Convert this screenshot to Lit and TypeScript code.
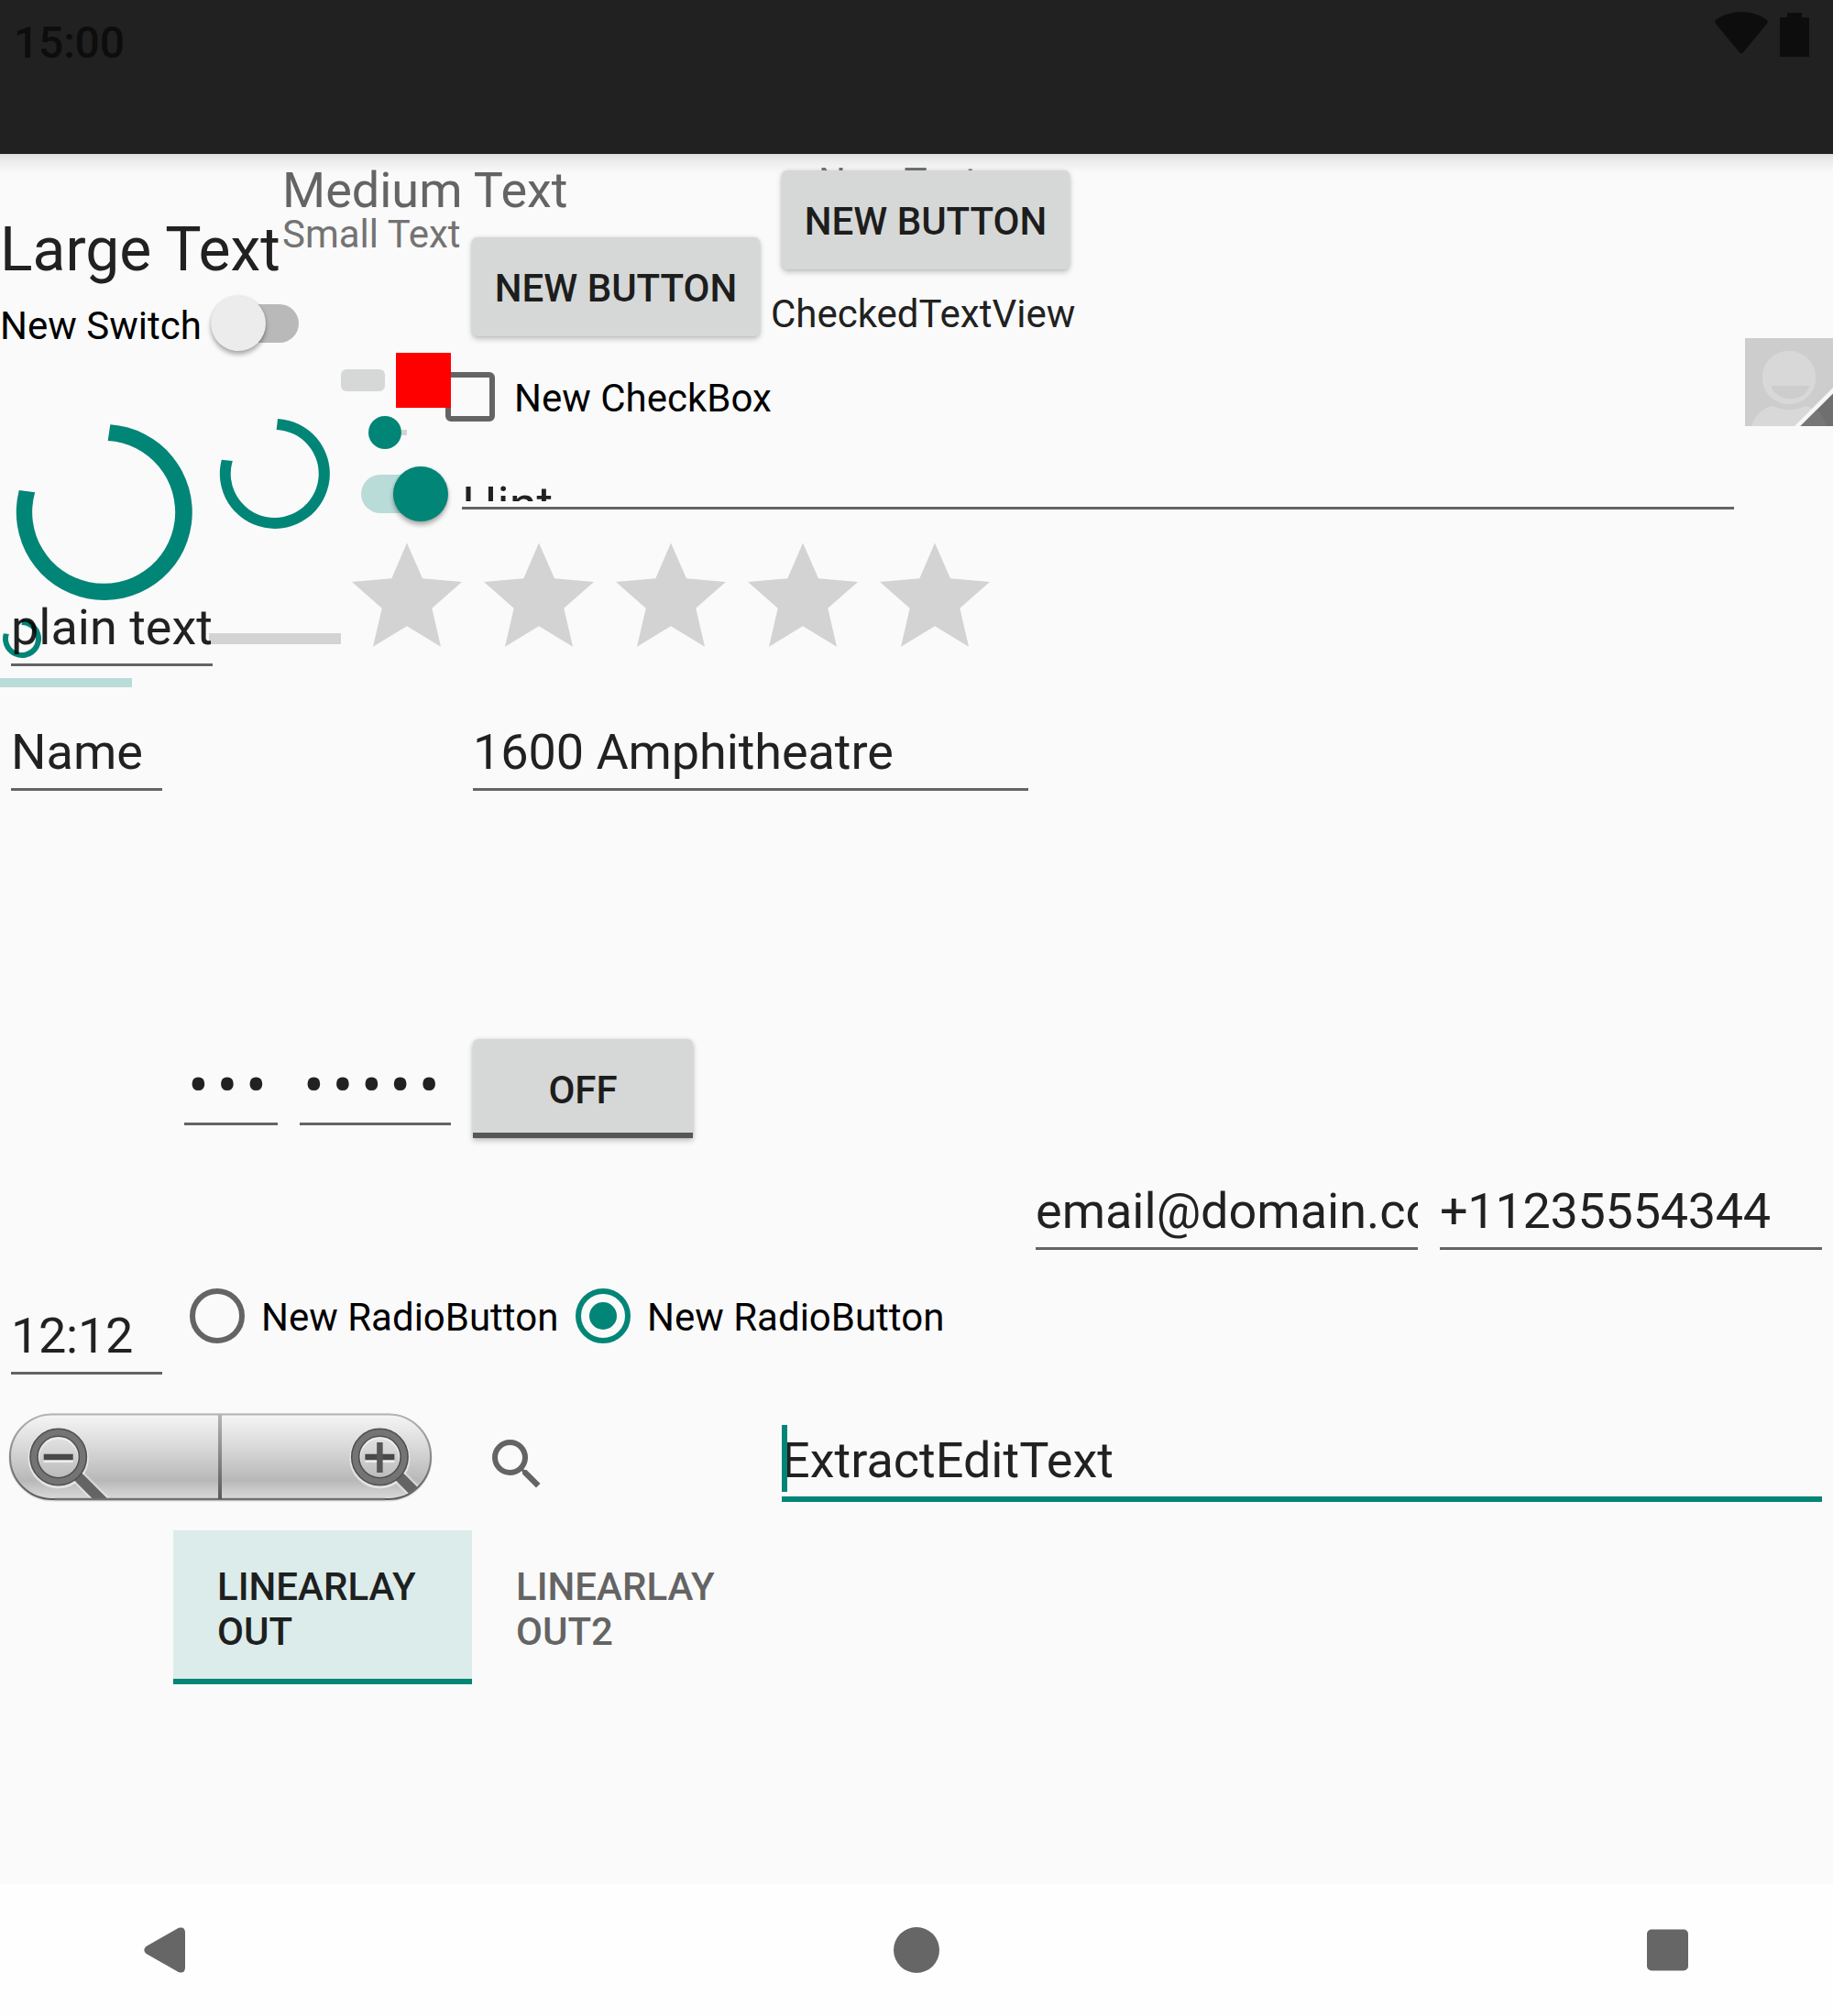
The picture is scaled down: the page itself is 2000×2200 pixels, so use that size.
import { LitElement, html, css, svg } from "lit";
import { customElement, property } from "lit/decorators.js";
import { classMap } from "lit/directives/class-map.js";

/** Single-line text field with an underline. */
@customElement("edit-field")
class EditField extends LitElement {
  @property() value = "";
  @property({ type: Boolean }) focused = false;
  @property({ type: Boolean }) secret = false;

  static styles = css`
    :host { display: block; position: relative; flex: none; }
    .text {
      height: 63px;
      line-height: 63px;
      font-size: 54px;
      color: rgba(0, 0, 0, 0.87);
      white-space: nowrap;
      overflow: hidden;
    }
    .secret { font-size: 68px; letter-spacing: 8.500px; padding-left: 4px; }
    .line { margin-top: 8px; height: 3px; background: #646464; }
    .line.on { height: 6px; background: #008577; }
    .cursor { position: absolute; left: 0; top: -7px; width: 6px; height: 73px; background: #008577; }
  `;

  render() {
    return html`
      ${this.focused ? html`<div class="cursor"></div>` : null}
      <div class=${classMap({ text: true, secret: this.secret })}>${this.value}</div>
      <div class=${classMap({ line: true, on: this.focused })}></div>
    `;
  }
}

@customElement("app-root")
class AppRoot extends LitElement {
  static styles = css`
    :host {
      display: flex;
      flex-direction: column;
      width: 2000px;
      height: 2200px;
      overflow: hidden;
      background: #fafafa;
      color: #000;
      font-family: Roboto, sans-serif;
      font-size: 42px;
      line-height: 49px;
      white-space: nowrap;
    }
    svg { display: block; flex: none; overflow: visible; }
    .bar {
      flex: none;
      display: flex;
      justify-content: space-between;
      height: 150px;
      padding: 18px 26px 0 15px;
      background: #212121;
      color: #0d0d0d;
      font-size: 48px;
      font-weight: 500;
      line-height: 57px;
      letter-spacing: -0.2px;
    }
    .shade {
      flex: none;
      height: 24px;
      margin-bottom: -24px;
      background: linear-gradient(#dedede, #ededed 35%, #f8f8f8 80%, #fafafa);
    }
    .status { display: flex; gap: 13px; margin-top: -5px; }

    .top { display: flex; height: 584px; }
    .top > div { flex: none; display: flex; flex-direction: column; align-items: flex-start; }
    .left { width: 308px; padding-top: 66px; }
    .mid { width: 196px; padding-top: 8px; position: relative; z-index: 1; }
    .right { width: 1496px; }
    .row { display: flex; align-items: flex-start; flex: none; }

    .large { font-size: 66px; line-height: 77px; color: #212121; }
    .medium { font-size: 54px; line-height: 63px; color: #646464; }
    .small { margin-top: -8px; color: #737373; }

    .switch-row { margin-top: 12px; height: 60px; }
    .switch-row .label { width: 230px; padding-top: 8px; }
    .track { display: flex; align-items: center; width: 84px; height: 42px; border-radius: 21px; }
    .thumb { flex: none; width: 60px; height: 60px; border-radius: 50%; box-shadow: 0 4px 5px rgba(0, 0, 0, 0.3), 0 0 3px rgba(0, 0, 0, 0.12); }
    .off { margin: 9px 0 0 12px; background: #b9b9b9; }
    .off .thumb { background: #ececec; margin-left: -12px; }
    .on { margin: 28px 0 0 86px; background: #b9dcd8; justify-content: flex-end; }
    .on .thumb { background: #008577; margin-right: -11px; }

    .spinners { margin-top: 74px; }
    .spinners .big { margin: 6px 30px 0 18px; }
    .plain { margin-top: -2px; position: relative; z-index: 2; }
    .plain edit-field { width: 220px; margin-left: 12px; z-index: 1; }
    .plain .tiny { position: absolute; left: 3px; top: 23px; }
    .plain .progress { flex: none; width: 144px; height: 12px; margin: 38px 0 0 -4px; background: #d3d3d3; }
    .buffer { width: 144px; height: 10px; margin-top: 13px; background: #b9dcd8; }

    .swatches { margin: 105px 0 0 64px; }
    .chip { width: 48px; height: 24px; margin: 18px 12px 0 0; border-radius: 6px; background: #d6d8d7; }
    .red { width: 60px; height: 60px; background: #f00; }
    .seek { display: flex; align-items: center; margin: 9px 0 0 94px; }
    .seek .knob { width: 36px; height: 36px; border-radius: 50%; background: #008577; }
    .seek .rest { width: 6px; height: 6px; background: #d3d3d3; }
    .stars { display: flex; gap: 24px; margin: 32px 0 0 76px; }

    .button {
      flex: none;
      box-sizing: border-box;
      width: 314px;
      height: 108px;
      padding-top: 31px;
      border-radius: 6px;
      background: #d6d8d7;
      color: #1d1d1d;
      font-weight: 500;
      text-align: center;
      box-shadow: 0 3px 6px rgba(0, 0, 0, 0.22), 0 0 4px rgba(0, 0, 0, 0.1);
    }
    .buttons { height: 201px; width: 1496px; }
    .buttons .first { margin: 91px 0 0 11px; }
    .stack { margin: 18px 0 0 12px; position: relative; }
    .stack .button { margin-left: 12px; position: relative; }
    .stack .ghost { position: absolute; left: 52px; top: -12px; color: #737373; }
    .checked { margin-top: 24px; color: #212121; }
    .avatar { margin-left: auto; margin-top: 201px; }
    .check { margin: 37px 0 0 -18px; }
    .box { box-sizing: border-box; width: 54px; height: 54px; border: 6px solid #646464; border-radius: 6px; }
    .check .label { margin: 4px 0 0 21px; }
    .hint { width: 1388px; margin-top: 59px; }
    .hint .clip { height: 28px; overflow: hidden; font-size: 54px; line-height: 63px; color: #212121; }
    .hint .line { height: 3px; margin-top: 6px; background: #646464; }

    .names { margin-top: 37px; padding-left: 12px; gap: 339px; }
    .names .name, .clock { width: 165px; }
    .clock { letter-spacing: -0.3px; }
    .names .street { width: 606px; letter-spacing: -0.08px; }
    .secrets { margin-top: 271px; padding-left: 201px; gap: 24px; }
    .secrets edit-field { margin-top: 20px; }
    .pin { width: 102px; }
    .password { width: 165px; }
    .toggle { width: 240px; border-radius: 6px 6px 0 0; border-bottom: 6px solid #555756; }
    .contacts { margin-top: 48px; padding-left: 1130px; gap: 24px; }
    .contacts edit-field { width: 417px; }
    .contacts .phone { letter-spacing: -0.3px; }
    .radios { margin-top: 42px; padding-left: 12px; }
    .clock { margin-top: 20px; }
    .radio { margin-left: 30px; }
    .radio + .label { margin: 7px 0 0 18px; width: 343px; }
    .radio.second { margin-left: 0; }
    .tools { margin-top: 42px; padding-left: 10px; }
    .tools .search { margin: 20px 0 0 57px; }
    .tools edit-field { width: 1135px; margin: 20px 0 0 253px; }
    .tabs { margin-top: 31px; padding-left: 189px; }
    .tab {
      box-sizing: border-box;
      width: 326px;
      height: 168px;
      padding: 37px 48px 0;
      color: #646464;
      font-weight: 500;
    }
    .tab.selected { color: #1d2020; background: #dcecea; border-bottom: 6px solid #008577; }

    .nav {
      flex: none;
      display: flex;
      align-items: center;
      justify-content: space-between;
      box-sizing: border-box;
      height: 144px;
      margin-top: auto;
      padding: 0 158px 0 157px;
      background: #fefefe;
    }
  `;

  private star = () => html`<svg width="120" height="114" viewBox="0 0 120 114">
    <path fill="#d3d3d3" d="M60 0.5 77 39.3 120 43 87.3 71.7 97 113.7 60 91.3 23 113.7 32.7 71.7 0 43 43.3 39.3Z" />
  </svg>`;

  /** Sweep ring of outer radius r and thickness w with slanted ends given relative to the centre. */
  private ring(cls: string, r: number, w: number, ends: number[]) {
    const [ax, ay, bx, by, cx, cy, dx, dy] = ends;
    const q = r - w;
    return html`<svg class=${cls} width=${2 * r} height=${2 * r} viewBox="${-r} ${-r} ${2 * r} ${2 * r}">
      <path fill="#008577" d="M${ax} ${ay}A${r} ${r} 0 1 1 ${bx} ${by}L${cx} ${cy}A${q} ${q} 0 1 0 ${dx} ${dy}Z" />
    </svg>`;
  }

  private lens = (x: number, plus: boolean) => svg`
    <g transform="translate(${x} 48)">
      <circle r="27" cy="1.5" fill="none" stroke="#f2f2f2" stroke-opacity="0.7" stroke-width="12" />
      <path d="M18 18 L62 62" stroke="#f0f0f0" stroke-opacity="0.5" stroke-width="16" />
      <path d="M18 18 L62 62" stroke="#646464" stroke-width="11.5" />
      <circle r="26.7" fill="none" stroke="#505050" stroke-width="9.6" />
      <circle r="26.7" fill="none" stroke="#747474" stroke-width="6.4" />
      <path d="M-16 4.5H16" stroke="#eee" stroke-width="3" />
      <path d="M-16 0H16" stroke="#484848" stroke-width="6.5" />
      ${plus ? svg`<path d="M0 -16V17" stroke="#565656" stroke-width="6.5" />` : null}
    </g>`;

  render() {
    return html`
      <header class="bar">
        <span>15:00</span>
        <div class="status">
          <svg width="58" height="49" viewBox="0 0 58 49">
            <path fill="#0d0d0d" d="M1.2 13C-.4 11.200 0 9.800 1.500 8.600C17-2.900 41-2.900 56.500 8.600C58 9.800 58.400 11.200 56.800 13L31.200 44Q29 46.600 26.800 44Z" />
          </svg>
          <svg width="32" height="49" viewBox="0 0 32 49">
            <path fill="#0d0d0d" d="M8 1H24V6H32V49H0V6H8Z" />
          </svg>
        </div>
      </header>
      <div class="shade"></div>

      <section class="top">
        <div class="left">
          <div class="large">Large Text</div>
          <div class="row switch-row">
            <span class="label">New Switch</span>
            <div class="track off"><div class="thumb"></div></div>
          </div>
          <div class="row spinners">
            ${this.ring("big", 96, 18, [6.3, -95.8, -93.2, -24, -75.8, -21.7, 3.7, -78])}
            ${this.ring("normal", 60, 12, [3, -60, -58.2, -15.3, -46.2, -14, 1.700, -48])}
          </div>
          <div class="row plain">
            ${this.ring("tiny", 21, 6, [0.5, -21, -20.2, -5.700, -14.2, -5, -0.5, -15])}
            <edit-field value="plain text"></edit-field>
            <div class="progress"></div>
          </div>
          <div class="buffer"></div>
        </div>

        <div class="mid">
          <div class="medium">Medium Text</div>
          <div class="small">Small Text</div>
          <div class="row swatches">
            <div class="chip"></div>
            <div class="red"></div>
          </div>
          <div class="seek"><div class="knob"></div><div class="rest"></div></div>
          <div class="track on"><div class="thumb"></div></div>
          <div class="stars">${[0, 1, 2, 3, 4].map(this.star)}</div>
        </div>

        <div class="right">
          <div class="row buttons">
            <div class="button first">NEW BUTTON</div>
            <div class="stack">
              <div class="ghost">New Text</div>
              <div class="button">NEW BUTTON</div>
              <div class="checked">CheckedTextView</div>
            </div>
            <svg class="avatar" width="96" height="96" viewBox="0 0 96 96">
              <path fill="#cdcdcd" d="M0 0H96V96H0Z" />
              <circle cx="48" cy="43" r="29.300" fill="#d8d8d8" />
              <path fill="#cdcdcd" d="M28.500 52H70.500C65 71 34 71 28.500 52Z" />
              <path fill="#d8d8d8" d="M7 96C11 84 19 76 30.500 74Q48 82.500 65.500 74C77 76 85 84 89 96Z" />
              <path fill="#f7f7f7" d="M54 96 96 54V96Z" />
              <path fill="#6f6f6f" d="M60.500 96 96 60.500V96Z" />
              <path fill="#767676" d="M60.500 96 78 78.500C83 82 87 88 89 96Z" />
            </svg>
          </div>
          <div class="row check">
            <div class="box"></div>
            <span class="label">New CheckBox</span>
          </div>
          <div class="hint">
            <div class="clip">Hint</div>
            <div class="line"></div>
          </div>
        </div>
      </section>

      <section class="row names">
        <edit-field class="name" value="Name"></edit-field>
        <edit-field class="street" value="1600 Amphitheatre"></edit-field>
      </section>

      <section class="row secrets">
        <edit-field class="pin" secret value="•••"></edit-field>
        <edit-field class="password" secret value="•••••"></edit-field>
        <div class="button toggle">OFF</div>
      </section>

      <section class="row contacts">
        <edit-field value="email@domain.com"></edit-field>
        <edit-field class="phone" value="+11235554344"></edit-field>
      </section>

      <section class="row radios">
        <edit-field class="clock" value="12:12"></edit-field>
        <svg class="radio" width="60" height="60" viewBox="0 0 60 60">
          <circle cx="30" cy="30" r="27" fill="none" stroke="#646464" stroke-width="6" />
        </svg>
        <span class="label">New RadioButton</span>
        <svg class="radio second" width="60" height="60" viewBox="0 0 60 60">
          <circle cx="30" cy="30" r="27" fill="none" stroke="#008577" stroke-width="6" />
          <circle cx="30" cy="30" r="15" fill="#008577" />
        </svg>
        <span class="label">New RadioButton</span>
      </section>

      <section class="row tools">
        <svg width="461" height="96" viewBox="0 0 461 96">
          <defs>
            <linearGradient id="face" x2="0" y2="1">
              <stop offset="0" stop-color="#f6f6f6" />
              <stop offset="0.4" stop-color="#d8d8d8" />
              <stop offset="0.78" stop-color="#b8b8b8" />
              <stop offset="1" stop-color="#dadada" />
            </linearGradient>
            <linearGradient id="edge" x2="0" y2="1">
              <stop offset="0" stop-color="#b4b4b4" />
              <stop offset="1" stop-color="#5a5a5a" />
            </linearGradient>
            <clipPath id="pill"><rect x="1" y="1" width="459" height="92" rx="46" /></clipPath>
          </defs>
          <rect x="1" y="2" width="459" height="93" rx="46.500" fill="none" stroke="#bbb" stroke-opacity="0.5" stroke-width="3" />
          <rect x="1" y="1" width="459" height="93" rx="46.500" fill="url(#face)" />
          <g clip-path="url(#pill)">${this.lens(53.700, false)}${this.lens(404.400, true)}</g>
          <rect x="1" y="1.500" width="459" height="92.500" rx="46" fill="none" stroke="url(#edge)" stroke-width="2" />
          <path d="M50 94H410" stroke="#707070" stroke-width="2.500" />
          <rect x="228" y="2" width="4" height="92" fill="url(#edge)" />
        </svg>
        <svg class="search" width="72" height="72" viewBox="0 0 24 24">
          <path fill="#646464" d="M15.500 14h-.79l-.28-.27A6.471 6.471 0 0 0 16 9.500 6.500 6.500 0 1 0 9.500 16c1.610 0 3.090-.59 4.230-1.570l.27.28v.79l5 4.990L20.490 19l-4.990-5zm-6 0C7.010 14 5 11.990 5 9.500S7.010 5 9.500 5 14 7.010 14 9.500 11.990 14 9.500 14z" />
        </svg>
        <edit-field focused value="ExtractEditText"></edit-field>
      </section>

      <section class="row tabs">
        <div class="tab selected">LINEARLAY<br />OUT</div>
        <div class="tab">LINEARLAY<br />OUT2</div>
      </section>

      <nav class="nav">
        <svg width="45" height="50" viewBox="0 0 45 50">
          <path fill="#666" d="M2.500 21 38 .8Q45-1 45 6V44Q45 51 38 49.200L2.500 29Q-2 25 2.500 21Z" />
        </svg>
        <svg width="50" height="50" viewBox="0 0 50 50"><circle cx="25" cy="25" r="25" fill="#666" /></svg>
        <svg width="45" height="46" viewBox="0 0 45 46"><rect y="0.500" width="45" height="45" rx="5" fill="#666" /></svg>
      </nav>
    `;
  }
}
